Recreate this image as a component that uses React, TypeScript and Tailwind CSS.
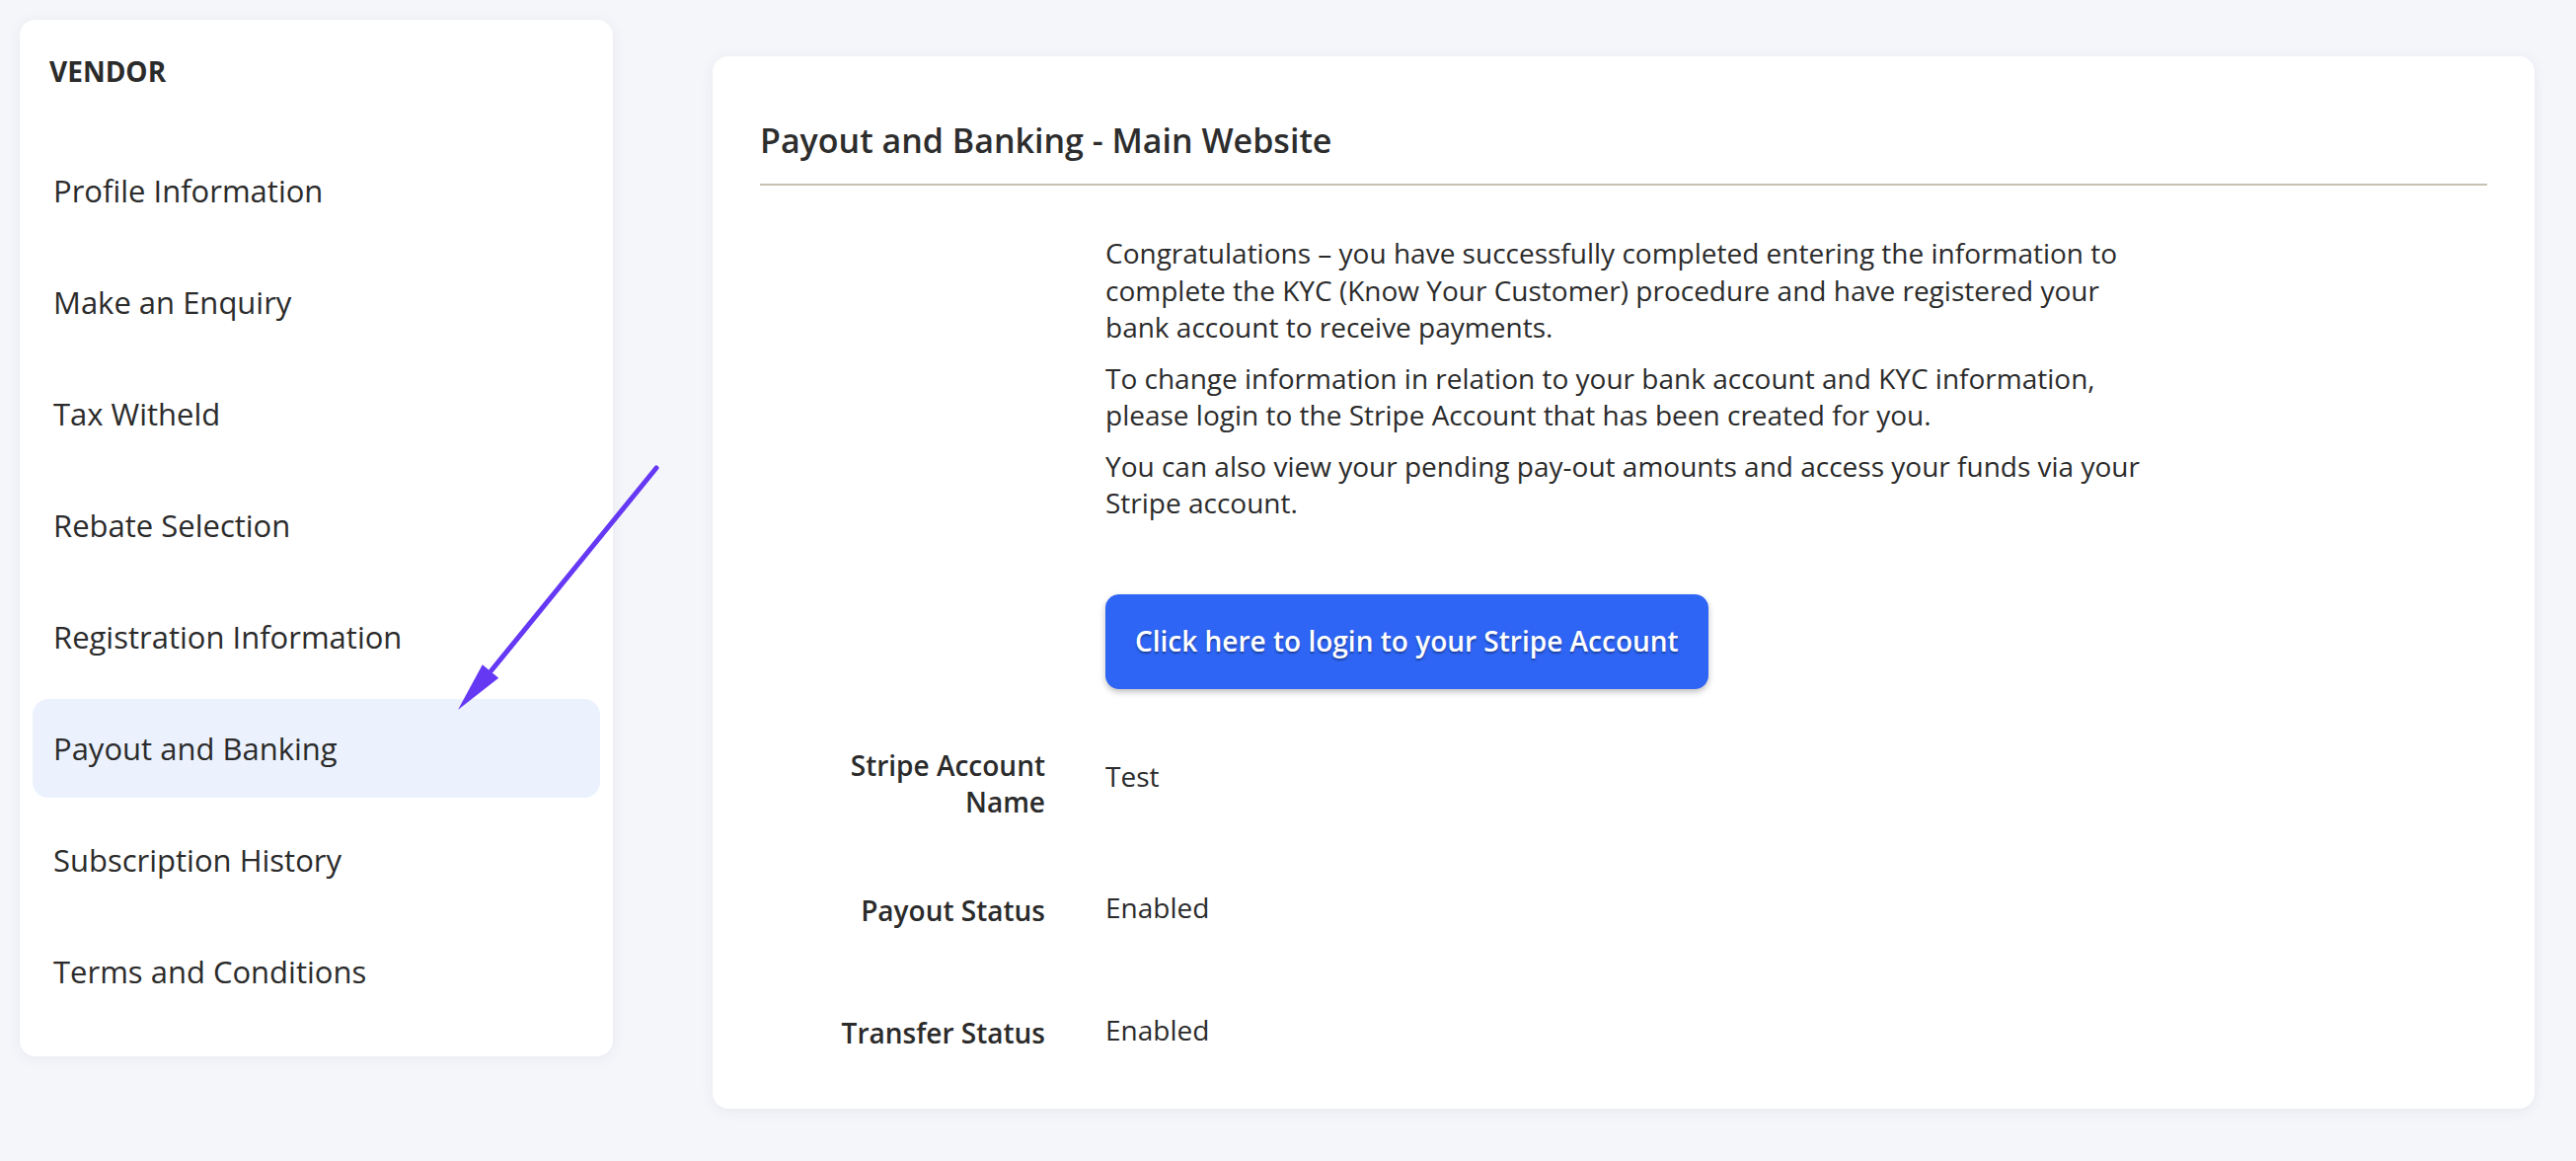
const menu = [
  "Profile Information",
  "Make an Enquiry",
  "Tax Witheld",
  "Rebate Selection",
  "Registration Information",
  "Payout and Banking",
  "Subscription History",
  "Terms and Conditions",
];

function Sidebar() {
  return (
    <aside className="w-[601px] shrink-0 rounded-[16px] bg-white pt-[34px] pb-[36px] px-[13px] shadow-[0_2px_14px_rgba(40,50,100,0.07)]">
      <h2 className="pl-[17px] text-[28px] leading-[37px] font-bold text-[#2b2b2b]">VENDOR</h2>
      <nav className="mt-[52px] flex flex-col gap-[13px]">
        {menu.map((item) => (
          <div
            key={item}
            className={`flex h-[100px] items-center rounded-[16px] pl-[21px] text-[31px] text-[#2b2b2b] ${
              item === "Payout and Banking" ? "bg-[#ebf2fd]" : ""
            }`}
          >
            {item}
          </div>
        ))}
      </nav>
    </aside>
  );
}

function Field({ label, value, labelPad, valuePad, top }: { label: string; value: string; labelPad: string; valuePad: string; top: string }) {
  return (
    <div className={`flex ${top}`}>
      <div className={`ml-[49px] w-[240px] text-right font-semibold ${labelPad}`}>{label}</div>
      <div className={`ml-[61px] ${valuePad}`}>{value}</div>
    </div>
  );
}

export default function App() {
  return (
    <div className="relative min-h-[1176px] bg-[#f5f6fa] font-['Open_Sans',sans-serif] text-[#2b2b2b]">
      <div className="flex items-start p-[20px]">
        <Sidebar />
        <main className="ml-[101px] mt-[37px] w-[1846px] rounded-[16px] bg-white px-[48px] pt-[65px] pb-[57px] shadow-[0_2px_14px_rgba(40,50,100,0.07)]">
          <h1 className="border-b-2 border-[#c6c2b1] pb-[24px] text-[34px] leading-[40px] font-semibold text-[#2d2d2d]">
            Payout and Banking - Main Website
          </h1>
          <div className="text-[28px] leading-[37.5px]">
            <div className="ml-[350px] mt-[50px] w-[1064px]">
              <p>
                Congratulations – you have successfully completed entering the information to complete the KYC (Know
                Your Customer) procedure and have registered your bank account to receive payments.
              </p>
              <p className="mt-[14px]">
                To change information in relation to your bank account and KYC information, please login to the Stripe
                Account that has been created for you.
              </p>
              <p className="mt-[14px]">
                You can also view your pending pay-out amounts and access your funds via your Stripe account.
              </p>
              <button className="mt-[73px] h-[96px] rounded-[14px] bg-[#2e65f5] px-[30px] text-[28px] font-semibold text-white shadow-[0_3px_6px_rgba(0,0,0,0.25)] [text-shadow:0_2px_2px_rgba(0,0,0,0.35)]">
                Click here to login to your Stripe Account
              </button>
            </div>
            <Field label="Stripe Account Name" value="Test" top="mt-[59px]" labelPad="" valuePad="pt-[11px]" />
            <Field label="Payout Status" value="Enabled" top="mt-[69px]" labelPad="pt-[3px]" valuePad="" />
            <Field label="Transfer Status" value="Enabled" top="mt-[84px]" labelPad="pt-[3px]" valuePad="" />
          </div>
        </main>
      </div>
      <svg className="pointer-events-none absolute left-0 top-0" width="2610" height="1176" viewBox="0 0 2610 1176">
        <line x1="665" y1="474" x2="498" y2="679" stroke="#6538f4" strokeWidth="5" strokeLinecap="round" />
        <polygon points="464,719 488.8,673.3 505.2,686.7" fill="#6538f4" />
      </svg>
    </div>
  );
}
